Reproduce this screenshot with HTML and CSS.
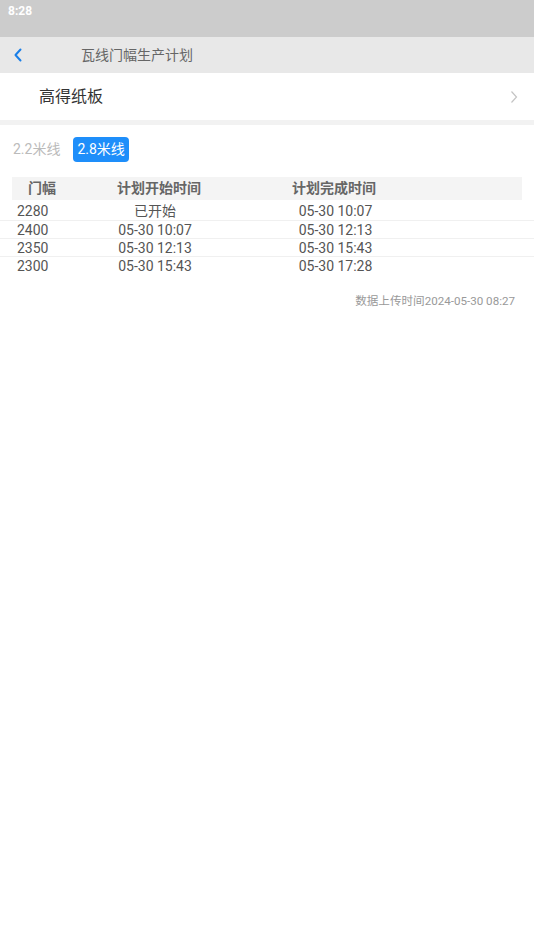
FILE: index.html
```html
<!DOCTYPE html>
<html>
<head>
    <title>瓦线门幅生产计划</title>
    <meta name="viewport" content="width=device-width, initial-scale=1.0">
    <link rel="stylesheet" href="styles.css">
</head>
<body>
    <div class="status-bar">8:28</div>

    <div class="nav-bar">
        <svg class="back" width="10" height="14" viewBox="0 0 10 14">
            <path d="M7.5 1.5 L2.5 7 L7.5 12.5" fill="none" stroke="#1a7fe8" stroke-width="2" stroke-linecap="round" stroke-linejoin="round"/>
        </svg>
        <span class="nav-title">瓦线门幅生产计划</span>
    </div>

    <div class="company">
        <span class="company-name">高得纸板</span>
        <svg class="more" width="8" height="14" viewBox="0 0 8 14">
            <path d="M1.5 1.5 L6.5 7 L1.5 12.5" fill="none" stroke="#c4c4c4" stroke-width="1.2"/>
        </svg>
    </div>
    <div class="divider"></div>

    <div class="tabs">
        <span class="tab">2.2米线</span>
        <span class="tab active">2.8米线</span>
    </div>

    <div class="table">
        <div class="thead">
            <div class="c1">门幅</div>
            <div class="c2">计划开始时间</div>
            <div class="c3">计划完成时间</div>
        </div>
        <div class="row">
            <div class="c1">2280</div>
            <div class="c2">已开始</div>
            <div class="c3">05-30 10:07</div>
        </div>
        <div class="row">
            <div class="c1">2400</div>
            <div class="c2">05-30 10:07</div>
            <div class="c3">05-30 12:13</div>
        </div>
        <div class="row">
            <div class="c1">2350</div>
            <div class="c2">05-30 12:13</div>
            <div class="c3">05-30 15:43</div>
        </div>
        <div class="row">
            <div class="c1">2300</div>
            <div class="c2">05-30 15:43</div>
            <div class="c3">05-30 17:28</div>
        </div>
    </div>

    <div class="upload-time">数据上传时间2024-05-30 08:27</div>
</body>
</html>
```

FILE: styles.css
```css
body {
    margin: 0;
    font-family: Roboto, "Noto Sans CJK SC", sans-serif;
    background: #fff;
    color: #333;
}
.status-bar {
    height: 37px;
    background: #cccccc;
    color: #fff;
    font-size: 12px;
    font-weight: bold;
    line-height: 23px;
    padding-left: 8px;
    box-sizing: border-box;
}
.nav-bar {
    height: 36px;
    background: #e8e8e8;
    display: flex;
    align-items: center;
    padding-bottom: 3px;
    box-sizing: border-box;
}
.back {
    margin-left: 13px;
    margin-top: 3px;
}
.nav-title {
    margin-left: 58px;
    font-size: 14px;
    color: #666;
}
.company {
    height: 47px;
    display: flex;
    align-items: center;
    justify-content: space-between;
    padding: 0 16px 3px 39px;
    box-sizing: border-box;
}
.more {
    margin-top: 3px;
}
.company-name {
    font-size: 16px;
    color: #333;
}
.divider {
    height: 5px;
    background: #f2f2f2;
}
.tabs {
    display: flex;
    align-items: center;
    padding: 12px 0 0 13px;
    gap: 13px;
}
.tab {
    font-size: 14px;
    color: #bbb;
    line-height: 25px;
}
.tab.active {
    background: #1e8efa;
    color: #fff;
    border-radius: 4px;
    padding: 0 4px;
}
.table {
    margin-top: 15px;
    font-size: 14px;
    color: #555;
}
.thead, .row {
    display: grid;
    grid-template-columns: 60px 170px 184px 1fr;
}
.thead {
    margin: 0 12px;
    height: 23px;
    line-height: 23px;
    background: #f4f4f4;
    font-weight: bold;
    color: #666;
    text-align: center;
}
.thead .c2 {
    padding-left: 4px;
}
.row {
    padding: 0 12px;
    height: 18px;
    line-height: 18px;
    text-align: center;
}
.thead + .row {
    margin-top: 2px;
}
.row + .row {
    border-top: 1px solid #f0f0f0;
    height: 17px;
}
.row .c1 {
    text-align: left;
    padding-left: 5px;
}
.row .c2 {
    padding-right: 4px;
}
.row .c3 {
    padding-left: 3px;
}
.upload-time {
    text-align: right;
    font-size: 11.6px;
    color: #999;
    padding-right: 19px;
    margin-top: 18px;
}
```
